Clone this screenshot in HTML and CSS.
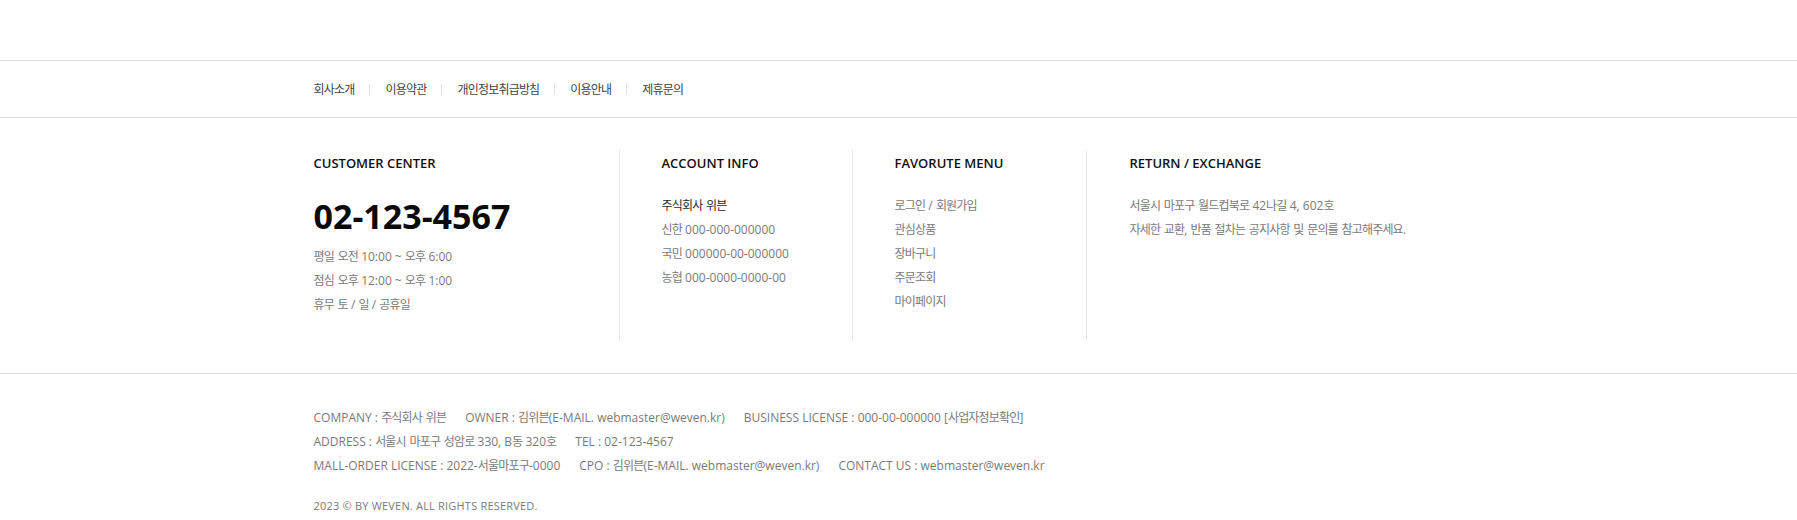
FILE: index.html
```html
<!DOCTYPE html>
<html lang="ko">
<head>
<meta charset="utf-8">
<title>Footer</title>
<link rel="stylesheet" href="styles.css">
</head>
<body>
<div class="top-space"></div>
<footer class="footer">
  <nav class="footer-nav">
    <div class="container nav-inner">
      <a class="nav-link ko" href="#">회사소개</a>
      <span class="nav-sep"></span>
      <a class="nav-link ko" href="#">이용약관</a>
      <span class="nav-sep"></span>
      <a class="nav-link ko" href="#">개인정보취급방침</a>
      <span class="nav-sep"></span>
      <a class="nav-link ko" href="#">이용안내</a>
      <span class="nav-sep"></span>
      <a class="nav-link ko" href="#">제휴문의</a>
    </div>
  </nav>

  <section class="footer-info">
    <div class="container info-grid">
      <div class="col col-cs">
        <h3 class="col-title">CUSTOMER CENTER</h3>
        <p class="phone">02-123-4567</p>
        <ul class="list gray">
          <li><span class="ko">평일 오전</span> 10:00 ~ <span class="ko">오후</span> 6:00</li>
          <li><span class="ko">점심 오후</span> 12:00 ~ <span class="ko">오후</span> 1:00</li>
          <li><span class="ko">휴무 토</span> / <span class="ko">일</span> / <span class="ko">공휴일</span></li>
        </ul>
      </div>
      <div class="col col-acc">
        <h3 class="col-title">ACCOUNT INFO</h3>
        <ul class="list gray first">
          <li class="dark"><span class="ko">주식회사 위븐</span></li>
          <li><span class="ko">신한</span> 000-000-000000</li>
          <li><span class="ko">국민</span> 000000-00-000000</li>
          <li><span class="ko">농협</span> 000-0000-0000-00</li>
        </ul>
      </div>
      <div class="col col-fav">
        <h3 class="col-title">FAVORUTE MENU</h3>
        <ul class="list gray first">
          <li><span class="ko">로그인</span> / <span class="ko">회원가입</span></li>
          <li><span class="ko">관심상품</span></li>
          <li><span class="ko">장바구니</span></li>
          <li><span class="ko">주문조회</span></li>
          <li><span class="ko">마이페이지</span></li>
        </ul>
      </div>
      <div class="col col-ret">
        <h3 class="col-title">RETURN / EXCHANGE</h3>
        <ul class="list gray first">
          <li><span class="ko">서울시 마포구 월드컵북로</span> 42<span class="ko">나길</span> 4, 602<span class="ko">호</span></li>
          <li><span class="ko">자세한 교환</span>, <span class="ko">반품 절차는 공지사항 및 문의를 참고해주세요</span>.</li>
        </ul>
      </div>
    </div>
  </section>

  <section class="footer-bottom">
    <div class="container">
      <p class="biz-line">
        <span>COMPANY : <span class="ko">주식회사 위븐</span></span>
        <span>OWNER : <span class="ko">김위븐</span>(E-MAIL. webmaster@weven.kr)</span>
        <span>BUSINESS LICENSE : 000-00-000000 [<span class="ko">사업자정보확인</span>]</span>
      </p>
      <p class="biz-line">
        <span>ADDRESS : <span class="ko">서울시 마포구 성암로</span> 330, B<span class="ko">동</span> 320<span class="ko">호</span></span>
        <span>TEL : 02-123-4567</span>
      </p>
      <p class="biz-line">
        <span>MALL-ORDER LICENSE : 2022-<span class="ko">서울마포구</span>-0000</span>
        <span>CPO : <span class="ko">김위븐</span>(E-MAIL. webmaster@weven.kr)</span>
        <span>CONTACT US : webmaster@weven.kr</span>
      </p>
      <p class="copy">2023 © BY WEVEN. ALL RIGHTS RESERVED.</p>
    </div>
  </section>
</footer>
</body>
</html>
```

FILE: styles.css
```css
* { box-sizing: border-box; }

html, body {
  margin: 0;
  padding: 0;
  background: #fff;
}

body {
  font-family: "Open Sans", "Noto Sans CJK KR", sans-serif;
  color: #333;
  font-size: 12px;
}

.ko {
  font-family: "Noto Sans CJK KR", "Open Sans", sans-serif;
  font-size: 12px;
  line-height: 1;
  letter-spacing: -0.8px;
  word-spacing: 1px;
}

.top-space { height: 60px; }

.container {
  width: 1170px;
  margin: 0 auto;
}

/* nav */
.footer-nav {
  border-top: 1px solid #dcdcdc;
  border-bottom: 1px solid #dcdcdc;
  height: 58px;
}

.nav-inner {
  display: flex;
  align-items: center;
  height: 56px;
  gap: 15px;
}

.nav-link {
  color: #444;
  text-decoration: none;
}

.nav-sep {
  width: 1px;
  height: 11px;
  background: #e0e0e0;
}

/* info */
.footer-info {
  border-bottom: 1px solid #dcdcdc;
  padding: 32px 0 33px;
}

.info-grid {
  display: flex;
  align-items: stretch;
}

.col {
  height: 190px;
  padding-top: 3px;
}

.col-cs { width: 305px; }

.col-acc, .col-fav, .col-ret {
  border-left: 1px solid #e6e6e6;
  padding-left: 42px;
}

.col-acc { width: 233px; }
.col-fav { width: 234px; }
.col-ret { flex: 1; padding-left: 43px; }

.col-title {
  margin: 0;
  font-size: 13px;
  font-weight: 600;
  line-height: 20px;
  color: #111;
}

.phone {
  margin: 23px 0 9px;
  font-size: 34px;
  font-weight: 700;
  line-height: 40px;
  color: #0a0a0a;
}

.list {
  list-style: none;
  margin: 0;
  padding: 0;
  font-size: 12px;
  line-height: 24px;
}

.list.first { margin-top: 21px; }

.gray { color: #7a7a7a; }
.list .dark { color: #2a2a2a; }

/* bottom */
.footer-bottom {
  padding-top: 32px;
}

.biz-line {
  margin: 0;
  font-size: 12px;
  line-height: 24px;
  color: #7a7a7a;
  display: flex;
  gap: 19px;
}

.copy {
  margin: 16px 0 0;
  font-size: 11px;
  letter-spacing: 0.2px;
  line-height: 24px;
  color: #7a7a7a;
}
```
